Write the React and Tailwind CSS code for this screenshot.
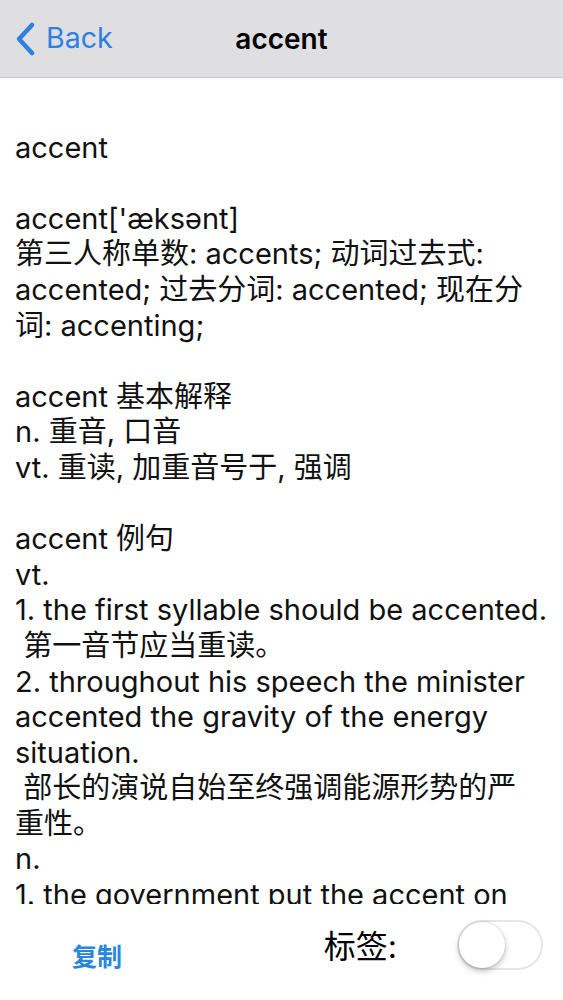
import React, { useState } from 'react';

// Dictionary entry for the word, one string per displayed line ('' = blank line)
const LINES = [
    '',
    'accent',
    '',
    "accent['æksənt]",
    '第三人称单数: accents; 动词过去式:',
    'accented; 过去分词: accented; 现在分',
    '词: accenting;',
    '',
    'accent 基本解释',
    'n. 重音, 口音',
    'vt. 重读, 加重音号于, 强调',
    '',
    'accent 例句',
    'vt.',
    '1. the first syllable should be accented.',
    ' 第一音节应当重读。',
    '2. throughout his speech the minister',
    'accented the gravity of the energy',
    'situation.',
    ' 部长的演说自始至终强调能源形势的严',
    '重性。',
    'n.',
    '1. the government put the accent on',
];

const FONT = "font-['Inter','Noto_Sans_CJK_SC',sans-serif]";

function Toggle() {
    const [on, setOn] = useState(false);
    return (
        <button
            onClick={() => setOn(!on)}
            className={`relative w-[86px] h-[50px] rounded-full border-2 transition-colors ${on ? 'bg-[#4cd964] border-[#4cd964]' : 'bg-white border-[#e6e6e6]'}`}
        >
            <span
                className={`absolute top-0 left-0 w-[46px] h-[46px] rounded-full bg-white shadow-[0_3px_6px_rgba(0,0,0,0.25),0_0_0_1px_rgba(0,0,0,0.06)] transition-transform ${on ? 'translate-x-[36px]' : 'translate-x-0'}`}
            />
        </button>
    );
}

export default function App() {
    return (
        <div className={`w-[563px] h-[1000px] bg-white flex flex-col overflow-hidden ${FONT}`}>
            {/* Navigation bar */}
            <div className="h-[78px] shrink-0 bg-[#dfdfe1] border-b border-[#c4c4c6] grid grid-cols-[1fr_auto_1fr] items-center">
                <div className="flex items-center pl-[14px] gap-[10px] text-[#2d7fe3]">
                    <svg width="22" height="36" viewBox="0 0 22 36" fill="none">
                        <path d="M18 4 L5 18 L18 32" stroke="currentColor" strokeWidth="4.5" strokeLinecap="round" strokeLinejoin="round" />
                    </svg>
                    <span className="text-[28.5px] leading-none">Back</span>
                </div>
                <div className="text-[28px] font-semibold text-black leading-none">accent</div>
                <div />
            </div>

            {/* Entry text */}
            <div className="flex-1 overflow-hidden pl-[15px] pr-[6px] pt-[16px]">
                <div className="text-[29px] leading-[35.6px] text-[#111] whitespace-pre">
                    {LINES.map((line, i) => (
                        <div key={i} className="h-[35.6px]">{line}</div>
                    ))}
                </div>
            </div>

            {/* Bottom actions */}
            <div className="h-[96px] shrink-0 bg-white flex items-center">
                <button className="ml-[72px] mt-[12px] text-[25px] font-bold text-[#2a86dd]">复制</button>
                <span className="ml-auto text-[32px] text-black mr-[60px] -mt-[10px]">标签:</span>
                <div className="mr-[20px] -mt-[10px]">
                    <Toggle />
                </div>
            </div>
        </div>
    );
}
